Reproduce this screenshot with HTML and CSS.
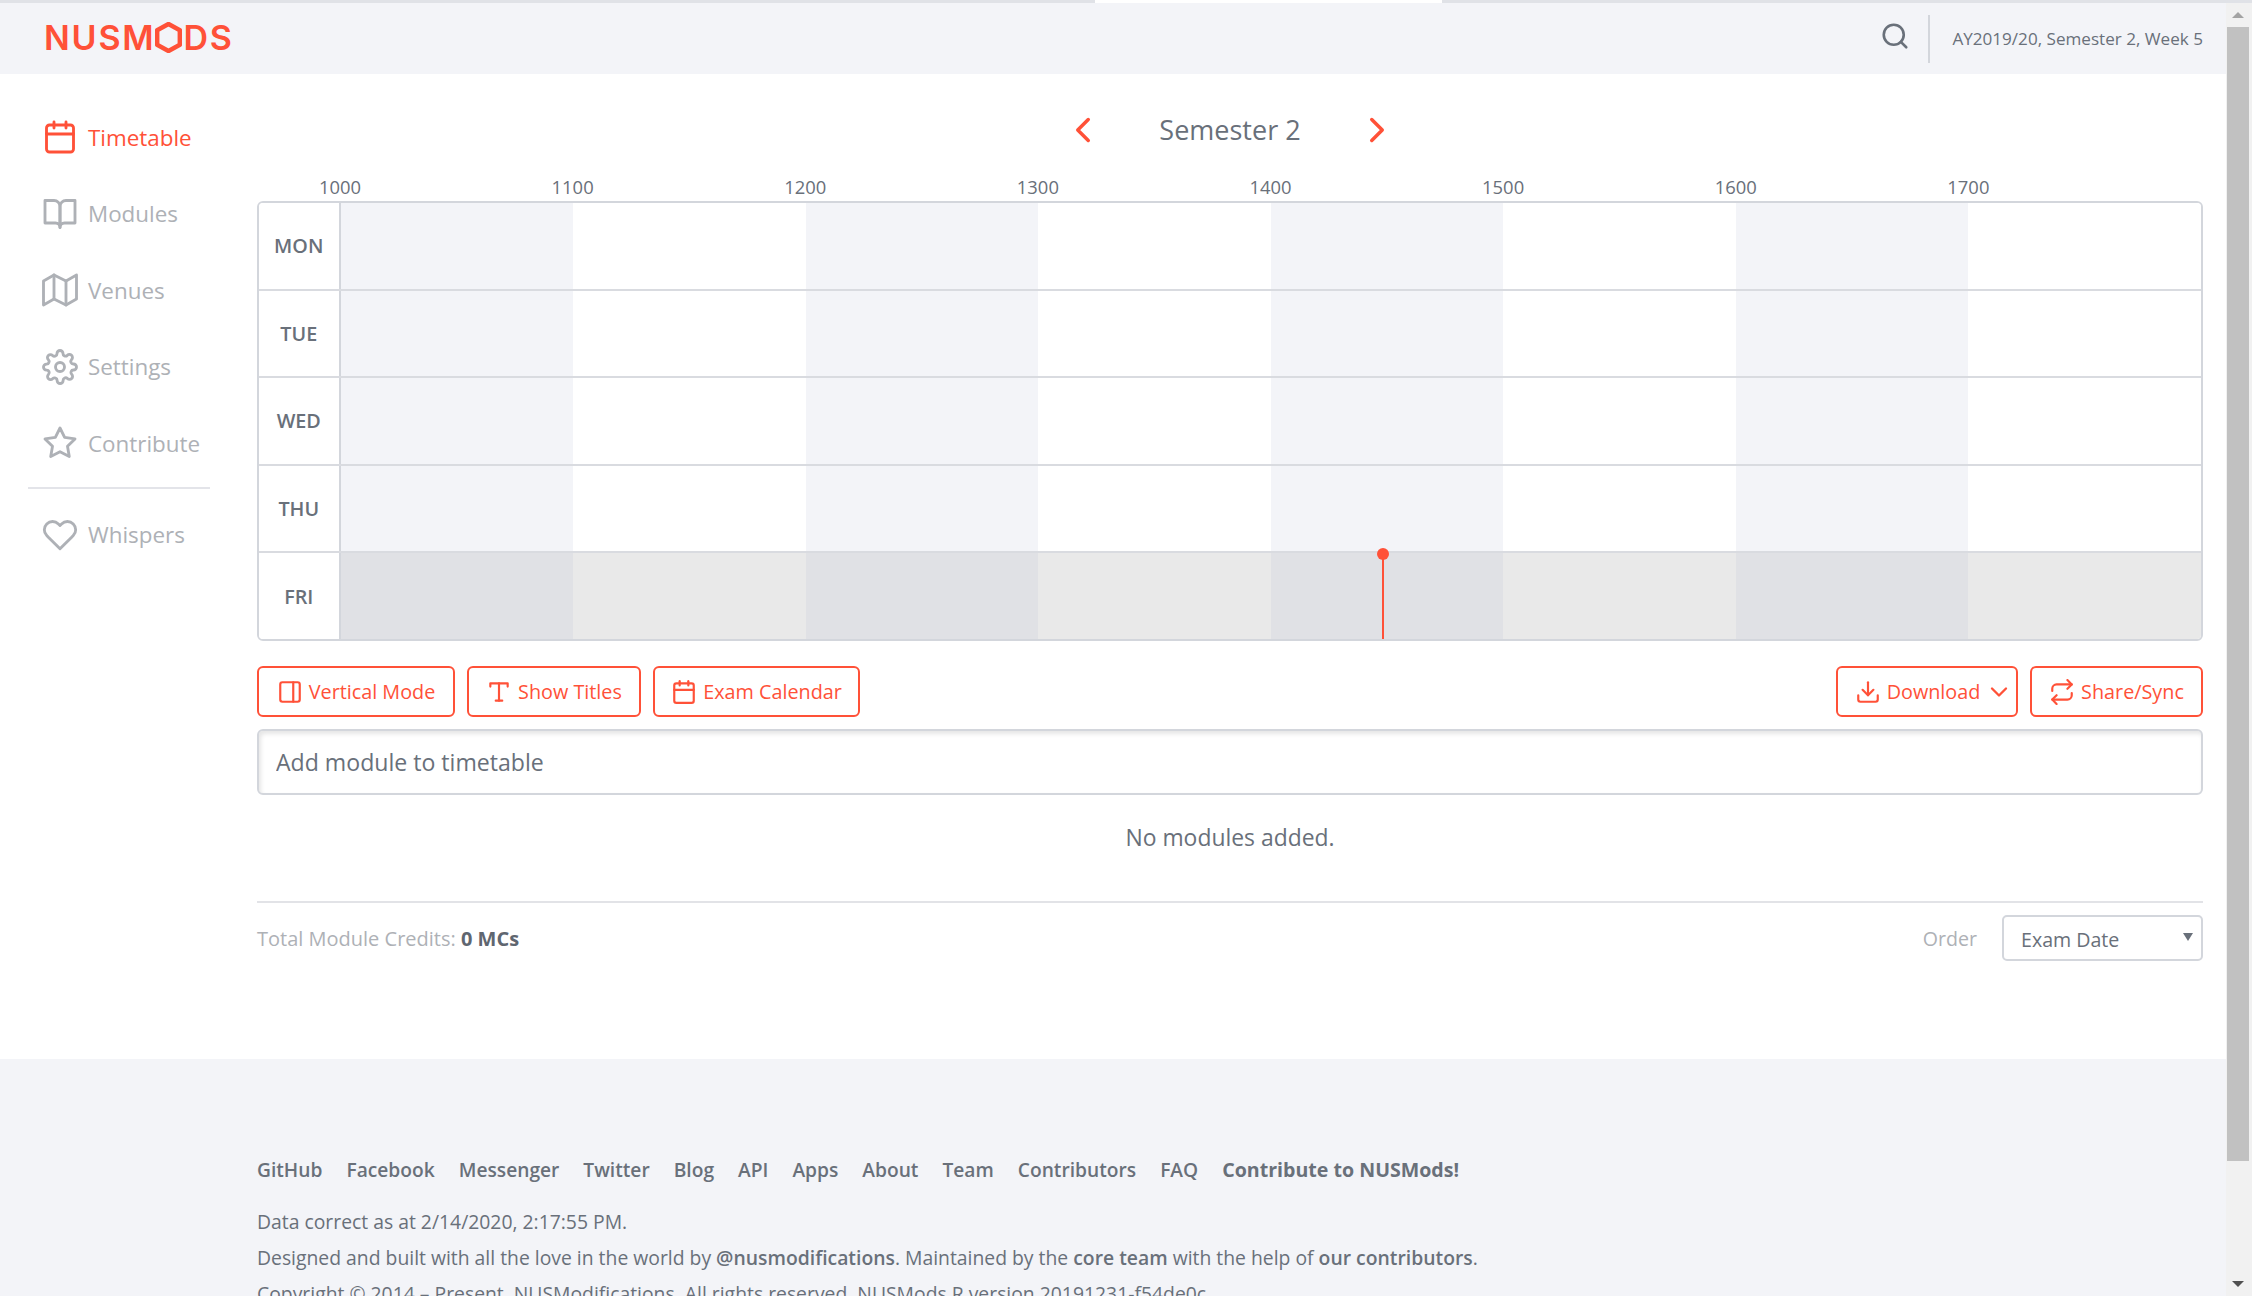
FILE: index.html
```html
<!DOCTYPE html>
<html lang="en">
<head>
<meta charset="utf-8">
<title>NUSMods</title>
<link rel="stylesheet" href="styles.css">
</head>
<body>
<div class="strip"><span class="strip-a"></span><span class="strip-b"></span><span class="strip-c"></span></div>
<div class="window">
  <div class="page">
    <header class="topbar">
      <a class="logo">NUSM<svg class="logo-o" viewBox="0 0 26 30" aria-label="O"><polygon points="13,2 24,8 24,22 13,28 2,22 2,8" fill="none" stroke="currentColor" stroke-width="4.4" stroke-linejoin="round"/></svg>DS</a>
      <div class="topbar-right">
        <svg class="ico search" viewBox="0 0 24 24"><circle cx="11" cy="11" r="8"/><line x1="21" y1="21" x2="16.65" y2="16.65"/></svg>
        <span class="week">AY2019/20, Semester 2, Week 5</span>
      </div>
    </header>
    <div class="content">
      <nav class="sidenav">
        <a class="nav-item active"><svg class="ico nav-ico" viewBox="0 0 24 24"><rect x="3" y="4" width="18" height="18" rx="2"/><line x1="16" y1="2" x2="16" y2="6"/><line x1="8" y1="2" x2="8" y2="6"/><line x1="3" y1="10" x2="21" y2="10"/></svg>Timetable</a>
        <a class="nav-item"><svg class="ico nav-ico" viewBox="0 0 24 24"><path d="M2 3h6a4 4 0 0 1 4 4v14a3 3 0 0 0-3-3H2z"/><path d="M22 3h-6a4 4 0 0 0-4 4v14a3 3 0 0 1 3-3h7z"/></svg>Modules</a>
        <a class="nav-item"><svg class="ico nav-ico" viewBox="0 0 24 24"><polygon points="1 6 1 22 8 18 16 22 23 18 23 2 16 6 8 2 1 6"/><line x1="8" y1="2" x2="8" y2="18"/><line x1="16" y1="6" x2="16" y2="22"/></svg>Venues</a>
        <a class="nav-item"><svg class="ico nav-ico" viewBox="0 0 24 24"><circle cx="12" cy="12" r="3"/><path d="M19.4 15a1.65 1.65 0 0 0 .33 1.82l.06.06a2 2 0 0 1 0 2.83 2 2 0 0 1-2.83 0l-.06-.06a1.65 1.65 0 0 0-1.82-.33 1.65 1.65 0 0 0-1 1.51V21a2 2 0 0 1-2 2 2 2 0 0 1-2-2v-.09A1.65 1.65 0 0 0 9 19.4a1.65 1.65 0 0 0-1.82.33l-.06.06a2 2 0 0 1-2.83 0 2 2 0 0 1 0-2.83l.06-.06a1.65 1.65 0 0 0 .33-1.82 1.65 1.65 0 0 0-1.51-1H3a2 2 0 0 1-2-2 2 2 0 0 1 2-2h.09A1.65 1.65 0 0 0 4.6 9a1.65 1.65 0 0 0-.33-1.82l-.06-.06a2 2 0 0 1 0-2.83 2 2 0 0 1 2.83 0l.06.06a1.65 1.65 0 0 0 1.82.33H9a1.65 1.65 0 0 0 1-1.51V3a2 2 0 0 1 2-2 2 2 0 0 1 2 2v.09a1.65 1.65 0 0 0 1 1.51 1.65 1.65 0 0 0 1.82-.33l.06-.06a2 2 0 0 1 2.83 0 2 2 0 0 1 0 2.83l-.06.06a1.65 1.65 0 0 0-.33 1.82V9a1.65 1.65 0 0 0 1.51 1H21a2 2 0 0 1 2 2 2 2 0 0 1-2 2h-.09a1.65 1.65 0 0 0-1.51 1z"/></svg>Settings</a>
        <a class="nav-item"><svg class="ico nav-ico" viewBox="0 0 24 24"><polygon points="12 2 15.09 8.26 22 9.27 17 14.14 18.18 21.02 12 17.77 5.82 21.02 7 14.14 2 9.27 8.91 8.26 12 2"/></svg>Contribute</a>
        <div class="nav-rule"></div>
        <a class="nav-item"><svg class="ico nav-ico" viewBox="0 0 24 24"><path d="M20.84 4.61a5.5 5.5 0 0 0-7.78 0L12 5.67l-1.06-1.06a5.5 5.5 0 0 0-7.78 7.78l1.06 1.06L12 21.23l7.78-7.78 1.06-1.06a5.5 5.5 0 0 0 0-7.78z"/></svg>Whispers</a>
      </nav>
      <main class="main">
        <div class="sem-nav">
          <svg class="ico chev" viewBox="0 0 24 24"><polyline points="15 18 9 12 15 6"/></svg>
          <span class="sem-title">Semester 2</span>
          <svg class="ico chev" viewBox="0 0 24 24"><polyline points="9 18 15 12 9 6"/></svg>
        </div>
        <div class="hours">
          <div class="hour"><span>1000</span></div><div class="hour"><span>1100</span></div><div class="hour"><span>1200</span></div><div class="hour"><span>1300</span></div><div class="hour"><span>1400</span></div><div class="hour"><span>1500</span></div><div class="hour"><span>1600</span></div><div class="hour"><span>1700</span></div>
        </div>
        <div class="tt">
          <div class="row"><div class="day">MON</div><div class="cell alt"></div><div class="cell"></div><div class="cell alt"></div><div class="cell"></div><div class="cell alt"></div><div class="cell"></div><div class="cell alt"></div><div class="cell"></div></div>
          <div class="row"><div class="day">TUE</div><div class="cell alt"></div><div class="cell"></div><div class="cell alt"></div><div class="cell"></div><div class="cell alt"></div><div class="cell"></div><div class="cell alt"></div><div class="cell"></div></div>
          <div class="row"><div class="day">WED</div><div class="cell alt"></div><div class="cell"></div><div class="cell alt"></div><div class="cell"></div><div class="cell alt"></div><div class="cell"></div><div class="cell alt"></div><div class="cell"></div></div>
          <div class="row"><div class="day">THU</div><div class="cell alt"></div><div class="cell"></div><div class="cell alt"></div><div class="cell"></div><div class="cell alt"></div><div class="cell"></div><div class="cell alt"></div><div class="cell"></div></div>
          <div class="row today"><div class="day">FRI</div><div class="cell alt"></div><div class="cell"></div><div class="cell alt"></div><div class="cell"></div><div class="cell alt"></div><div class="cell"></div><div class="cell alt"></div><div class="cell"></div></div>
          <div class="now"></div>
        </div>
        <div class="actions">
          <button class="btn w-vert"><svg class="ico btn-ico" viewBox="0 0 24 24"><rect x="3" y="3" width="18" height="18" rx="2"/><line x1="15" y1="3" x2="15" y2="21"/></svg>Vertical Mode</button>
          <button class="btn w-titles"><svg class="ico btn-ico" viewBox="0 0 24 24"><polyline points="4 7 4 4 20 4 20 7"/><line x1="9" y1="20" x2="15" y2="20"/><line x1="12" y1="4" x2="12" y2="20"/></svg>Show Titles</button>
          <button class="btn w-exam"><svg class="ico btn-ico" viewBox="0 0 24 24"><rect x="3" y="4" width="18" height="18" rx="2"/><line x1="16" y1="2" x2="16" y2="6"/><line x1="8" y1="2" x2="8" y2="6"/><line x1="3" y1="10" x2="21" y2="10"/></svg>Exam Calendar</button>
          <span class="spacer"></span>
          <button class="btn w-dl"><svg class="ico btn-ico" viewBox="0 0 24 24"><path d="M21 15v4a2 2 0 0 1-2 2H5a2 2 0 0 1-2-2v-4"/><polyline points="7 10 12 15 17 10"/><line x1="12" y1="15" x2="12" y2="3"/></svg>Download<svg class="ico btn-caret" viewBox="0 0 24 24"><polyline points="6 9 12 15 18 9"/></svg></button>
          <button class="btn w-share"><svg class="ico btn-ico" viewBox="0 0 24 24"><polyline points="17 1 21 5 17 9"/><path d="M3 11V9a4 4 0 0 1 4-4h14"/><polyline points="7 23 3 19 7 15"/><path d="M21 13v2a4 4 0 0 1-4 4H3"/></svg>Share/Sync</button>
        </div>
        <input class="add-input" type="text" placeholder="Add module to timetable">
        <p class="empty">No modules added.</p>
        <div class="totals">
          <span class="credits">Total Module Credits: <strong>0 MCs</strong></span>
          <span class="spacer"></span>
          <span class="order">Order</span>
          <div class="select-wrap"><select class="select"><option>Exam Date</option></select><span class="select-arrow"></span></div>
        </div>
      </main>
    </div>
    <footer class="footer">
      <ul class="foot-links">
        <li>GitHub</li><li>Facebook</li><li>Messenger</li><li>Twitter</li><li>Blog</li><li>API</li><li>Apps</li><li>About</li><li>Team</li><li>Contributors</li><li>FAQ</li><li class="strong">Contribute to NUSMods!</li>
      </ul>
      <p class="foot-line">Data correct as at 2/14/2020, 2:17:55 PM.</p>
      <p class="foot-line">Designed and built with all the love in the world by <b>@nusmodifications</b>. Maintained by the <b>core team</b> with the help of <b>our contributors</b>.</p>
      <p class="foot-line">Copyright © 2014 – Present, NUSModifications. All rights reserved. NUSMods R version 20191231-f54de0c</p>
    </footer>
  </div>
  <div class="scrollbar">
    <span class="sb-btn"><span class="tri-up"></span></span>
    <span class="sb-thumb"></span>
    <span class="sb-rest"></span>
    <span class="sb-btn"><span class="tri-down"></span></span>
  </div>
</div>
</body>
</html>
```

FILE: styles.css
```css
* { box-sizing: border-box; }
html, body { margin: 0; height: 1296px; overflow: hidden; background: #fff; }
body { font-family: "Open Sans", "Noto Sans", sans-serif; color: #69707a; font-size: 22px; display: flex; flex-direction: column; }

.strip { display: flex; height: 3px; flex: none; background: #e0e2e7; }
.strip-a { width: 1095px; }
.strip-b { width: 347px; background: #fff; }
.strip-c { flex: 1; }

.window { flex: 1; display: flex; min-height: 0; }
.page { width: 2226px; flex: none; overflow: hidden; display: flex; flex-direction: column; }

.topbar { height: 71px; flex: none; background: #f3f4f8; display: flex; align-items: center; justify-content: space-between; padding: 0 23px 0 44px; }
.logo { display: flex; align-items: center; font-family: Inter, "Open Sans", sans-serif; font-weight: 600; font-size: 34px; letter-spacing: 1.8px; color: #ff5138; margin-bottom: 2px; }
.logo-o { width: 27px; height: 31px; margin: 0 2px 0 -1px; }
.topbar-right { display: flex; align-items: center; }
.ico { fill: none; stroke: currentColor; stroke-width: 2; stroke-linecap: round; stroke-linejoin: round; flex: none; }
.search { width: 30px; height: 30px; color: #69707a; margin: 0 18px 5px 0; stroke-width: 2.1; }
.week { font-size: 17.1px; line-height: 48px; padding-left: 22px; border-left: 2px solid #d3d6dc; }

.content { display: flex; flex: none; height: 985px; }
.sidenav { width: 257px; flex: none; padding: 37px 0 0 28px; }
.nav-item { display: flex; align-items: center; height: 52px; margin-bottom: 24.5px; font-size: 22.4px; color: #aeb1b6; width: 182px; padding-left: 14px; }
.nav-item.active { color: #ff5138; }
.nav-ico { width: 36px; height: 36px; margin-right: 10px; stroke-width: 1.9; }
.nav-rule { height: 2px; background: #e3e4e9; width: 182px; margin: -7px 0 20px; }

.main { width: 1946px; flex: none; }
.sem-nav { height: 112px; display: flex; align-items: center; justify-content: center; gap: 13px; }
.chev { width: 42px; height: 42px; color: #ff5138; stroke-width: 2; }
.sem-title { font-size: 27px; width: 226px; text-align: center; padding-bottom: 2px; }
.hours { height: 15px; display: flex; padding-left: 83px; padding-right: 2px; font-size: 18.4px; line-height: 1; }
.hour { flex: 1; }
.hour span { display: inline-block; transform: translateX(-50%) translateY(-8px); }

.tt { position: relative; border: 2px solid #d3d6dc; border-radius: 6px; overflow: hidden; height: 440px; display: flex; flex-direction: column; }
.row { display: flex; height: 87.6px; flex: none; border-bottom: 2px solid #d9dbe0; }
.row:last-of-type { border-bottom: 0; flex: 1; }
.day { width: 81.5px; flex: none; border-right: 2px solid #d3d6dc; display: flex; align-items: center; justify-content: center; font-size: 19.8px; font-weight: 600; background: #fff; }
.cell { flex: 1; background: #fff; }
.cell.alt { background: #f3f4f8; }
.today .cell { background: #e9e9e9; }
.today .cell.alt { background: #e0e1e5; }
.now { position: absolute; left: 1123px; top: 351px; bottom: 0; width: 2px; background: #ff5138; }
.now::before { content: ""; position: absolute; left: -5px; top: -6px; width: 12px; height: 12px; border-radius: 50%; background: #ff5138; }

.actions { display: flex; gap: 12px; margin-top: 25px; height: 51px; }
.spacer { flex: 1; }
.btn { height: 51px; border: 2px solid #ff5138; border-radius: 6px; background: #fff; color: #ff5138; font-family: inherit; font-size: 19.8px; display: flex; align-items: center; justify-content: center; padding: 0; }
.btn-ico { width: 26px; height: 26px; margin-right: 6px; }
.btn-caret { width: 28px; height: 28px; margin-left: 5px; margin-right: -14px; }
.w-vert { width: 198px; }
.w-titles { width: 174px; }
.w-exam { width: 207px; }
.w-dl { width: 182px; }
.w-share { width: 173px; }

.add-input { display: block; width: 100%; height: 66px; margin-top: 12px; border: 2px solid #d3d6dc; border-radius: 6px; padding: 0 17px; font-family: inherit; font-size: 23.1px; color: #69707a; box-shadow: inset 2px 3px 4px rgba(0,0,0,.1); outline: 0; }
.add-input::placeholder { color: #69707a; opacity: 1; }
.empty { margin: 0; height: 108px; text-align: center; line-height: 86px; font-size: 22.9px; border-bottom: 2px solid #e2e3e7; }

.totals { display: flex; align-items: center; height: 46px; margin-top: 12px; font-size: 20px; }
.credits { color: #aeb1b6; }
.credits strong { color: #5f6670; font-weight: 700; }
.order { color: #aeb1b6; margin-right: 25px; font-size: 19.6px; }
.select-wrap { position: relative; width: 201px; height: 46px; }
.select { appearance: none; width: 100%; height: 100%; border: 2px solid #d3d6dc; border-radius: 5px; background: #fff; padding: 2px 17px 0; font-family: inherit; font-size: 19.6px; color: #69707a; }
.select-arrow { position: absolute; right: 10px; top: 18px; width: 0; height: 0; border-left: 5px solid transparent; border-right: 5px solid transparent; border-top: 8px solid #69707a; }

.footer { background: #f3f4f8; flex: 1; padding: 98px 0 0 257px; font-size: 19.35px; white-space: nowrap; }
.foot-links { list-style: none; margin: 0 0 21px; padding: 0; display: flex; gap: 24px; font-weight: 600; line-height: 26px; font-size: 19.2px; }
.foot-links .strong { font-weight: 700; font-size: 19.6px; }
.foot-line { margin: 0; line-height: 36px; }
.foot-line b { font-weight: 600; }

.scrollbar { width: 26px; flex: none; background: #f1f1f1; display: flex; flex-direction: column; padding: 0 3px 0 1px; }
.sb-btn { height: 24px; flex: none; display: flex; align-items: center; justify-content: center; }
.sb-thumb { height: 1134px; background: #c1c1c1; flex: none; }
.sb-rest { flex: 1; }
.tri-up { border-left: 6px solid transparent; border-right: 6px solid transparent; border-bottom: 6px solid #a3a3a3; }
.tri-down { border-left: 6px solid transparent; border-right: 6px solid transparent; border-top: 6px solid #505050; }
```
